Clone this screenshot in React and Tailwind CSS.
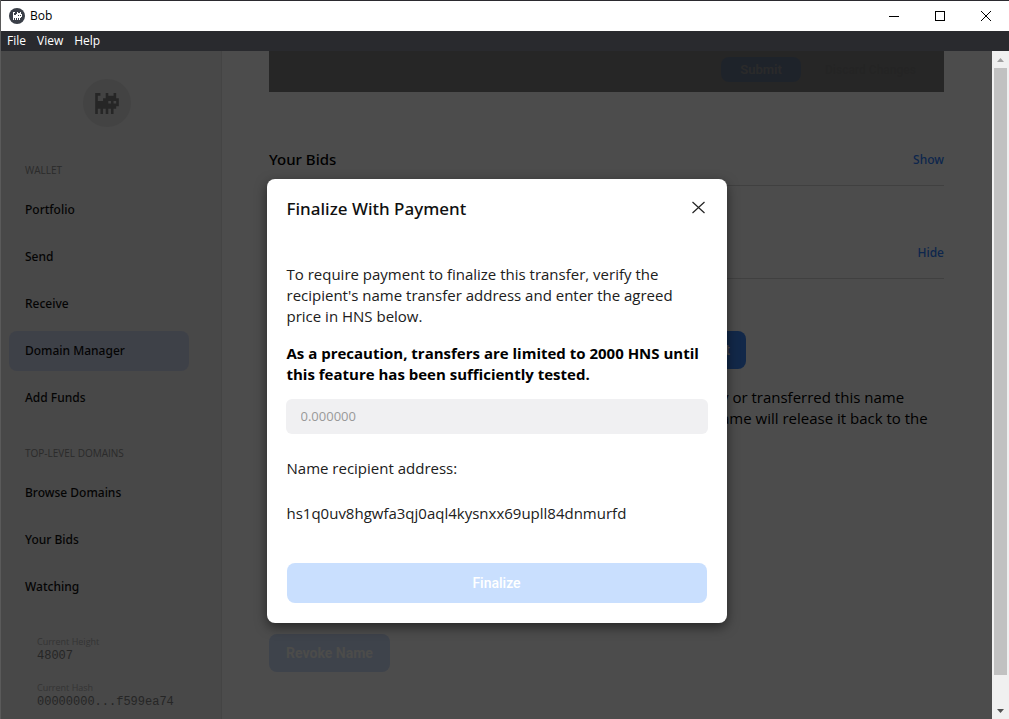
import React from "react";

const CAT = [
  "11..1..1.",
  "1...1111.",
  "1..111111",
  "11111.1.1",
  "111111111",
  "11111111.",
  "1.1.1.1..",
  "1.1.1.1..",
];

const CAT_PATH = CAT.flatMap((row, y) =>
  [...row].map((c, x) => (c === "1" ? `M${x} ${y}h1v1h-1z` : ""))
).join("");

function Cat({ className }) {
  return (
    <svg viewBox="0 0 9 8" className={className} fill="currentColor" aria-hidden="true">
      <path d={CAT_PATH} />
    </svg>
  );
}

function TitleBar() {
  return (
    <header className="flex h-[31px] shrink-0 items-center border-t border-[#2b2a2f] bg-white text-black">
      <span className="ml-2 flex size-4 items-center justify-center rounded-full bg-[#3a3f48] text-white">
        <Cat className="h-2 w-[9px]" />
      </span>
      <span className="ml-[5px] text-xs">Bob</span>
      <div className="ml-auto flex h-full">
        <button aria-label="Minimize" className="flex w-[46px] items-center justify-center">
          <svg width="10" height="10" shapeRendering="crispEdges"><path d="M0 5h10v1H0z" /></svg>
        </button>
        <button aria-label="Maximize" className="flex w-[46px] items-center justify-center">
          <svg width="10" height="10" shapeRendering="crispEdges"><rect x=".5" y=".5" width="9" height="9" fill="none" stroke="#000" /></svg>
        </button>
        <button aria-label="Close window" className="flex w-[46px] items-center justify-center">
          <svg width="10" height="10"><path d="M0 0l10 10M10 0L0 10" stroke="#000" /></svg>
        </button>
      </div>
    </header>
  );
}

function MenuBar() {
  return (
    <nav className="flex h-5 shrink-0 items-center gap-[11px] bg-[#292a2e] pl-1.5 text-xs text-white">
      <button>File</button>
      <button>View</button>
      <button>Help</button>
    </nav>
  );
}

function NavItem({ children, active }) {
  return (
    <a
      href="#"
      className={
        "flex h-10 items-center rounded-lg px-4 font-['Noto_Sans',sans-serif] text-xs font-medium text-[#101010] " +
        (active ? "bg-[#d0d9f2]" : "")
      }
    >
      {children}
    </a>
  );
}

function Sidebar() {
  return (
    <aside className="flex w-[221px] shrink-0 flex-col border-r border-[#e4e4e4] bg-[#f0f0f0] px-2">
      <div className="mt-7 ml-[74px] flex size-12 items-center justify-center rounded-full bg-[#e0e0e0] text-[#808080]">
        <Cat className="h-[21px] w-6" />
      </div>
      <h2 className="mt-[35px] px-4 text-[10px] leading-4 text-[#909090]">WALLET</h2>
      <div className="mt-3 flex w-[180px] flex-col gap-[7px]">
        <NavItem>Portfolio</NavItem>
        <NavItem>Send</NavItem>
        <NavItem>Receive</NavItem>
        <NavItem active>Domain Manager</NavItem>
        <NavItem>Add Funds</NavItem>
      </div>
      <h2 className="mt-[27px] px-4 text-[10px] leading-4 text-[#909090]">TOP-LEVEL DOMAINS</h2>
      <div className="mt-3 flex w-[180px] flex-col gap-[7px]">
        <NavItem>Browse Domains</NavItem>
        <NavItem>Your Bids</NavItem>
        <NavItem>Watching</NavItem>
      </div>
      <dl className="mt-7 px-7 text-[9px] leading-[14px] text-[#b0b0b0]">
        <dt>Current Height</dt>
        <dd className="font-['Liberation_Mono',monospace] text-xs leading-[14px] text-[#808080]">48007</dd>
        <dt className="mt-[18px]">Current Hash</dt>
        <dd className="font-['Liberation_Mono',monospace] text-xs leading-[14px] text-[#808080]">00000000...f599ea74</dd>
      </dl>
    </aside>
  );
}

function SectionHeader({ title, action }) {
  return (
    <div className="flex h-[39px] items-start justify-between border-b border-[#d8d8d8] font-['Noto_Sans',sans-serif] leading-6 font-medium">
      <h2 className="text-[15px]">{title}</h2>
      <a href="#" className="text-xs leading-[26px] text-[#2f80ff]">{action}</a>
    </div>
  );
}

function Domain() {
  return (
    <main className="min-w-0 flex-1 bg-white pr-12 pl-[47px] text-black">
      <div className="flex h-[41px] items-start justify-end gap-[22px] bg-[#808080] pt-1.5 pr-[26px] font-[Roboto,sans-serif] text-[13px] font-semibold">
        <button className="h-[25px] w-20 rounded-lg bg-[#66768c] text-[#8e8e8e]">Submit</button>
        <button className="h-[25px] w-[95px] text-xs text-[#7a7a7a]">Discard Changes</button>
      </div>
      <section className="mt-[55px]">
        <SectionHeader title="Your Bids" action="Show" />
      </section>
      <section className="mt-[54px]">
        <SectionHeader title="Your Records" action="Hide" />
      </section>
      <div className="mt-[52px] flex justify-end pr-[198px]">
        <button className="h-[38px] w-[121px] rounded-lg bg-[#3f88f5] pr-4 text-right font-[Roboto,sans-serif] text-sm font-medium text-white">
          Edit
        </button>
      </div>
      <div className="mt-[18px] flex justify-end pr-[11px] text-[15px] leading-[21px]">
        <p className="w-[212px] whitespace-nowrap">
          y or transferred this name
          <br />
          ame will release it back to the
        </p>
      </div>
      <button className="mt-[205px] h-[38px] w-[121px] rounded-lg bg-[#cfdffb] font-[Roboto,sans-serif] text-sm font-bold text-[#fdfdf8]">
        Revoke Name
      </button>
    </main>
  );
}

function Modal() {
  return (
    <div className="absolute inset-0 flex items-start justify-center bg-black/70 pt-32">
      <div
        role="dialog"
        aria-labelledby="dialog-title"
        className="flex w-[460px] flex-col rounded-lg bg-white px-5 pb-5 text-[15px] leading-[21px] text-[#202020] shadow-[0_4px_12px_rgba(0,0,0,0.5)]"
      >
        <div className="flex items-start justify-between pt-[18px]">
          <h1 id="dialog-title" className="font-['Noto_Sans',sans-serif] text-[17px] leading-6 font-medium text-[#101010]">
            Finalize With Payment
          </h1>
          <button aria-label="Close" className="flex h-5 w-4 items-center justify-center">
            <svg width="13" height="13"><path d="M.5 1l12 11M12.5 1L.5 12" stroke="#222" strokeWidth="1.2" /></svg>
          </button>
        </div>
        <p className="mt-[43px]">
          To require payment to finalize this transfer, verify the
          <br />
          recipient's name transfer address and enter the agreed
          <br />
          price in HNS below.
        </p>
        <p className="mt-4 font-bold whitespace-nowrap text-black">
          As a precaution, transfers are limited to 2000 HNS until
          <br />
          this feature has been sufficiently tested.
        </p>
        <input
          aria-label="Price in HNS"
          placeholder="0.000000"
          className="-mx-px mt-3.5 h-[35px] rounded-md bg-[#f0f0f2] px-[15px] pb-px text-[13px] outline-none placeholder:text-[#999]"
        />
        <p className="mt-6">Name recipient address:</p>
        <p className="mt-6">hs1q0uv8hgwfa3qj0aql4kysnxx69upll84dnmurfd</p>
        <button className="mt-[39px] h-10 rounded-lg bg-[#c9dffe] font-[Roboto,sans-serif] text-sm font-medium text-white">
          Finalize
        </button>
      </div>
    </div>
  );
}

function Scrollbar() {
  return (
    <div className="flex w-[17px] shrink-0 flex-col items-center bg-[#f0f0f0]">
      <svg width="17" height="17" className="shrink-0"><path d="M5 11h7L8.500 7z" fill="#a0a0a0" /></svg>
      <div className="w-[13px] flex-1 bg-[#c1c1c1]" />
      <svg width="17" height="44" className="shrink-0"><path d="M5 34h7l-3.500 4z" fill="#505050" /></svg>
    </div>
  );
}

export default function App() {
  return (
    <div className="flex h-screen flex-col overflow-hidden border-l border-[#5a5a5a] font-['Open_Sans',sans-serif]">
      <TitleBar />
      <MenuBar />
      <div className="flex min-h-0 flex-1">
        <div className="relative flex min-w-0 flex-1 overflow-hidden">
          <Sidebar />
          <Domain />
          <Modal />
        </div>
        <Scrollbar />
      </div>
    </div>
  );
}
